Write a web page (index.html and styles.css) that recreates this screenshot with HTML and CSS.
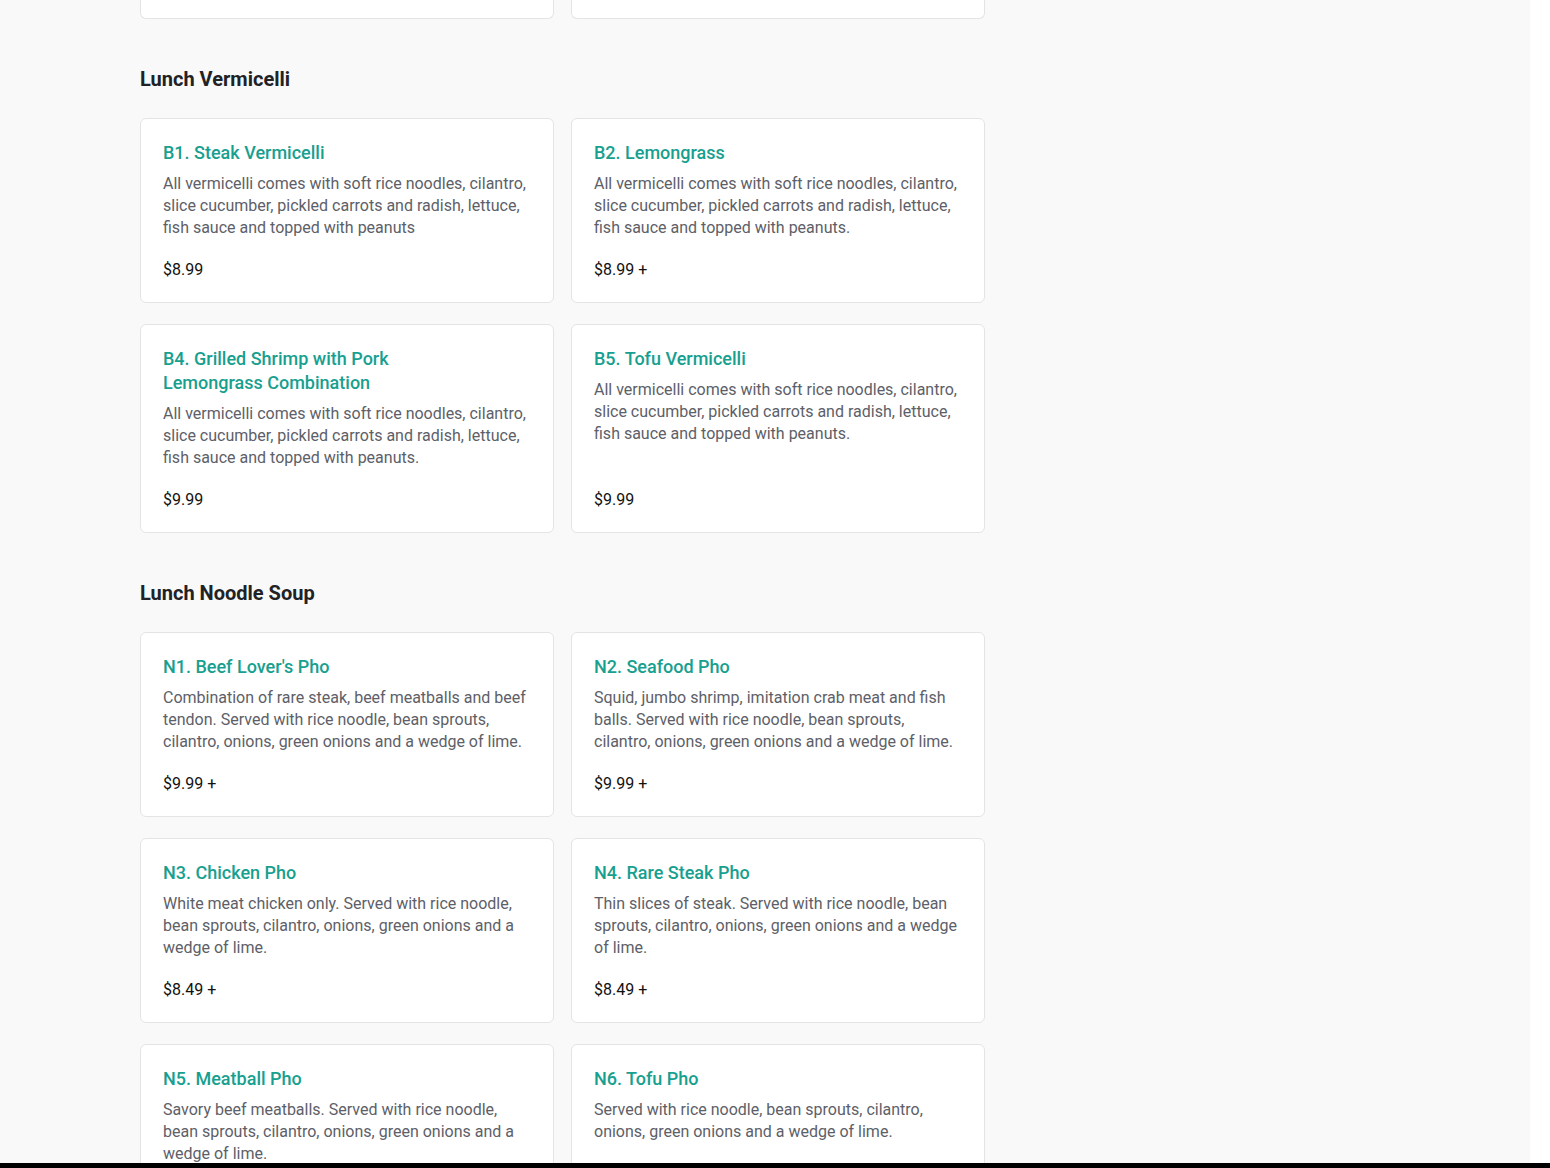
FILE: index.html
```html
<!DOCTYPE html>
<html lang="en">
<head>
<meta charset="utf-8">
<title>Lunch Menu</title>
<link rel="stylesheet" href="styles.css">
</head>
<body>
<div class="page">
  <main class="menu">
    <div class="grid stub-row">
      <div class="stub"></div>
      <div class="stub"></div>
    </div>

    <section class="section">
      <h2 class="section-title">Lunch Vermicelli</h2>
      <div class="grid">
        <article class="card">
          <h3 class="item-name">B1. Steak Vermicelli</h3>
          <p class="item-desc">All vermicelli comes with soft rice noodles, cilantro, slice cucumber, pickled carrots and radish, lettuce, fish sauce and topped with peanuts</p>
          <div class="item-price">$8.99</div>
        </article>
        <article class="card">
          <h3 class="item-name">B2. Lemongrass</h3>
          <p class="item-desc">All vermicelli comes with soft rice noodles, cilantro, slice cucumber, pickled carrots and radish, lettuce, fish sauce and topped with peanuts.</p>
          <div class="item-price">$8.99 +</div>
        </article>
        <article class="card">
          <h3 class="item-name">B4. Grilled Shrimp with Pork<br>Lemongrass Combination</h3>
          <p class="item-desc">All vermicelli comes with soft rice noodles, cilantro, slice cucumber, pickled carrots and radish, lettuce, fish sauce and topped with peanuts.</p>
          <div class="item-price">$9.99</div>
        </article>
        <article class="card">
          <h3 class="item-name">B5. Tofu Vermicelli</h3>
          <p class="item-desc">All vermicelli comes with soft rice noodles, cilantro, slice cucumber, pickled carrots and radish, lettuce, fish sauce and topped with peanuts.</p>
          <div class="item-price">$9.99</div>
        </article>
      </div>
    </section>

    <section class="section">
      <h2 class="section-title">Lunch Noodle Soup</h2>
      <div class="grid">
        <article class="card">
          <h3 class="item-name">N1. Beef Lover's Pho</h3>
          <p class="item-desc">Combination of rare steak, beef meatballs and beef tendon. Served with rice noodle, bean sprouts, cilantro, onions, green onions and a wedge of lime.</p>
          <div class="item-price">$9.99 +</div>
        </article>
        <article class="card">
          <h3 class="item-name">N2. Seafood Pho</h3>
          <p class="item-desc">Squid, jumbo shrimp, imitation crab meat and fish balls. Served with rice noodle, bean sprouts, cilantro, onions, green onions and a wedge of lime.</p>
          <div class="item-price">$9.99 +</div>
        </article>
        <article class="card">
          <h3 class="item-name">N3. Chicken Pho</h3>
          <p class="item-desc">White meat chicken only. Served with rice noodle, bean sprouts, cilantro, onions, green onions and a wedge of lime.</p>
          <div class="item-price">$8.49 +</div>
        </article>
        <article class="card">
          <h3 class="item-name">N4. Rare Steak Pho</h3>
          <p class="item-desc">Thin slices of steak. Served with rice noodle, bean sprouts, cilantro, onions, green onions and a wedge of lime.</p>
          <div class="item-price">$8.49 +</div>
        </article>
        <article class="card">
          <h3 class="item-name">N5. Meatball Pho</h3>
          <p class="item-desc">Savory beef meatballs. Served with rice noodle, bean sprouts, cilantro, onions, green onions and a wedge of lime.</p>
          <div class="item-price">$8.49 +</div>
        </article>
        <article class="card">
          <h3 class="item-name">N6. Tofu Pho</h3>
          <p class="item-desc">Served with rice noodle, bean sprouts, cilantro, onions, green onions and a wedge of lime.</p>
          <div class="item-price">$8.49 +</div>
        </article>
      </div>
    </section>
  </main>
</div>
<div class="bottom-bar"></div>
</body>
</html>
```

FILE: styles.css
```css
html, body {
  margin: 0;
  padding: 0;
  height: 100%;
  overflow: hidden;
}

body {
  background: #ffffff;
  font-family: Roboto, "Liberation Sans", Arial, sans-serif;
}

.page {
  width: 1530px;
  min-height: 100%;
  background: #f9f9f9;
  padding-left: 140px;
  box-sizing: border-box;
}

.menu {
  width: 845px;
}

.grid {
  display: grid;
  grid-template-columns: 414px 414px;
  column-gap: 17px;
  row-gap: 21px;
}

.stub-row {
  height: 19px;
}

.stub {
  background: #ffffff;
  border: 1px solid #e4e4e4;
  border-top: none;
  border-radius: 0 0 6px 6px;
}

.section {
  padding-top: 46px;
}

.section-title {
  margin: 0 0 25px 0;
  font-size: 20px;
  line-height: 28px;
  font-weight: 700;
  color: #212226;
}

.card {
  background: #ffffff;
  border: 1px solid #e4e4e4;
  border-radius: 6px;
  padding: 22px 22px 21px 22px;
  display: flex;
  flex-direction: column;
  box-sizing: border-box;
  min-height: 185px;
}

.item-name {
  margin: 0;
  font-size: 18px;
  line-height: 24px;
  font-weight: 500;
  color: #17a08f;
}

.item-desc {
  margin: 8px 0 0 0;
  font-size: 16px;
  line-height: 22px;
  color: #5d6068;
}

.item-price {
  margin-top: auto;
  padding-top: 20px;
  font-size: 16px;
  line-height: 22px;
  color: #111111;
}

.bottom-bar {
  position: fixed;
  left: 0;
  right: 0;
  bottom: 0;
  height: 5px;
  background: #000000;
}
```
